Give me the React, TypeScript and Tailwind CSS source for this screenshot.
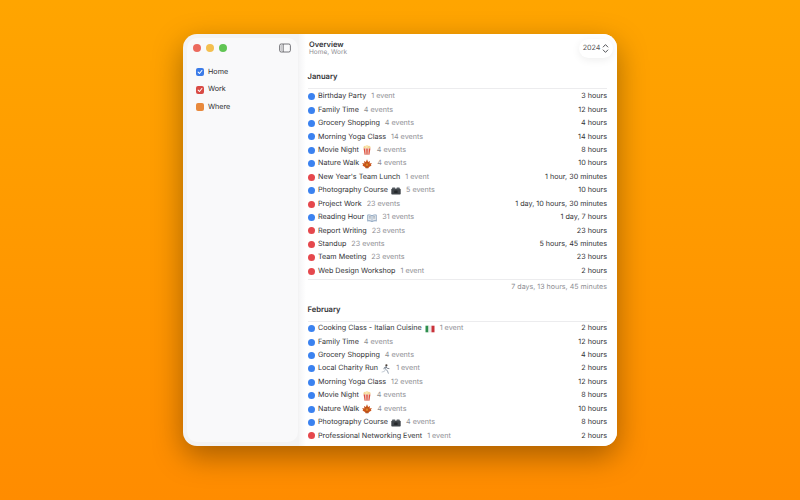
import React from "react";

const Popcorn = () => (
  <svg width="10" height="10" viewBox="0 0 10 10" className="shrink-0">
    <circle cx="3" cy="2.4" r="1.6" fill="#f3d79a" /><circle cx="5" cy="1.8" r="1.7" fill="#fbe7b0" /><circle cx="7" cy="2.4" r="1.6" fill="#f3d79a" />
    <path d="M1.6 3.4h6.8L7.4 9.8H2.6z" fill="#f0e6de" />
    <path d="M1.6 3.4h1.6l.4 6.4h-1zM4.2 3.4h1.6l-.2 6.4h-1.2zM6.8 3.4h1.6l-1 6.4h-1z" fill="#e0503f" />
  </svg>
);
const Leaf = () => (
  <svg width="10" height="10" viewBox="0 0 10 10" className="shrink-0">
    <path d="M5 .2 6.1 3l1.9-1-.4 2.6 2.2-.5-1 2 .8.5-3 1.7.3.9L5 8.8l-1.9.4.3-.9-3-1.7.8-.5-1-2 2.2.5L2 2l1.9 1z" fill="#c9541a" />
    <path d="M5 3.6v6.2" stroke="#7a3413" strokeWidth=".6" />
    <path d="M5 3.4 6.2 6 5 7.4 3.8 6z" fill="#e08a2a" />
  </svg>
);
const Clapper = () => (
  <svg width="10" height="10" viewBox="0 0 10 10" className="shrink-0">
    <rect x=".3" y="2.8" width="9.4" height="5.8" rx=".8" fill="#3f4449" />
    <rect x="1" y="1.6" width="3.4" height="1.6" rx=".7" fill="#565c62" /><rect x="5.4" y="1.6" width="3.4" height="1.6" rx=".7" fill="#565c62" />
    <rect x="3.2" y="4.4" width="3.4" height="2.6" rx=".6" fill="#24272a" />
  </svg>
);
const Book = () => (
  <svg width="10" height="10" viewBox="0 0 10 10" className="shrink-0">
    <path d="M.3 1.8C2 1.4 3.8 1.4 5 2.3c1.2-.9 3-.9 4.7-.5v6.6C8 8.1 6.2 8.1 5 8.9 3.8 8.1 2 8.1.3 8.4z" fill="#86a0bd" />
    <path d="M1.1 2.4c1.2-.2 2.6-.1 3.6.6v4.9c-1-.6-2.4-.7-3.6-.5zM8.9 2.4c-1.2-.2-2.6-.1-3.6.6v4.9c1-.6 2.4-.7 3.6-.5z" fill="#e6eaee" />
    <path d="M1.9 3.7h2M1.9 5h2M6.1 3.7h2M6.1 5h2" stroke="#808a96" strokeWidth=".6" />
  </svg>
);
const Italy = () => (
  <svg width="10" height="10" viewBox="0 0 10 10" className="shrink-0">
    <rect x=".5" y="1.7" width="3" height="6.6" fill="#2f8f4e" /><rect x="3.5" y="1.7" width="3" height="6.6" fill="#ececec" /><rect x="6.5" y="1.7" width="3" height="6.6" fill="#c9323a" />
  </svg>
);
const Runner = () => (
  <svg width="10" height="10" viewBox="0 0 10 10" className="shrink-0" fill="none">
    <circle cx="5.4" cy="1.3" r="1.1" fill="#4b4038" />
    <path d="M5.2 2.8 4.4 5.4l2 1.2.9 2.7" stroke="#9aa5b3" strokeWidth="1" strokeLinecap="round" />
    <path d="M4.4 5.4 3.4 7.4 1 8" stroke="#c0c7d1" strokeWidth=".9" strokeLinecap="round" />
    <path d="M5.2 3 3.4 3.6 3 4.8M5.2 3l1.2 1.4 1.6.2" stroke="#4b5563" strokeWidth=".7" strokeLinecap="round" />
  </svg>
);

type Row = { c: "b" | "r"; name: string; icon?: React.ReactNode; ev: string; t: string };

const jan: Row[] = [
  { c: "b", name: "Birthday Party", ev: "1 event", t: "3 hours" },
  { c: "b", name: "Family Time", ev: "4 events", t: "12 hours" },
  { c: "b", name: "Grocery Shopping", ev: "4 events", t: "4 hours" },
  { c: "b", name: "Morning Yoga Class", ev: "14 events", t: "14 hours" },
  { c: "b", name: "Movie Night", icon: <Popcorn />, ev: "4 events", t: "8 hours" },
  { c: "b", name: "Nature Walk", icon: <Leaf />, ev: "4 events", t: "10 hours" },
  { c: "r", name: "New Year's Team Lunch", ev: "1 event", t: "1 hour, 30 minutes" },
  { c: "b", name: "Photography Course", icon: <Clapper />, ev: "5 events", t: "10 hours" },
  { c: "r", name: "Project Work", ev: "23 events", t: "1 day, 10 hours, 30 minutes" },
  { c: "b", name: "Reading Hour", icon: <Book />, ev: "31 events", t: "1 day, 7 hours" },
  { c: "r", name: "Report Writing", ev: "23 events", t: "23 hours" },
  { c: "r", name: "Standup", ev: "23 events", t: "5 hours, 45 minutes" },
  { c: "r", name: "Team Meeting", ev: "23 events", t: "23 hours" },
  { c: "r", name: "Web Design Workshop", ev: "1 event", t: "2 hours" },
];
const feb: Row[] = [
  { c: "b", name: "Cooking Class - Italian Cuisine", icon: <Italy />, ev: "1 event", t: "2 hours" },
  { c: "b", name: "Family Time", ev: "4 events", t: "12 hours" },
  { c: "b", name: "Grocery Shopping", ev: "4 events", t: "4 hours" },
  { c: "b", name: "Local Charity Run", icon: <Runner />, ev: "1 event", t: "2 hours" },
  { c: "b", name: "Morning Yoga Class", ev: "12 events", t: "12 hours" },
  { c: "b", name: "Movie Night", icon: <Popcorn />, ev: "4 events", t: "8 hours" },
  { c: "b", name: "Nature Walk", icon: <Leaf />, ev: "4 events", t: "10 hours" },
  { c: "b", name: "Photography Course", icon: <Clapper />, ev: "4 events", t: "8 hours" },
  { c: "r", name: "Professional Networking Event", ev: "1 event", t: "2 hours" },
];

function EventRow({ r }: { r: Row }) {
  return (
    <div className="flex h-[13.43px] items-center text-[7.2px]">
      <span className={`mr-[3.5px] size-[7px] shrink-0 rounded-full ${r.c === "b" ? "bg-[#3b82f0]" : "bg-[#e5484d]"}`} />
      <span className="flex items-center gap-[3px] text-[#333336]">{r.name}{r.icon}</span>
      <span className="ml-[5px] text-[#8e8e93]">{r.ev}</span>
      <span className="ml-auto text-[#333336]">{r.t}</span>
    </div>
  );
}

function Check({ color, checked }: { color: string; checked: boolean }) {
  return (
    <span className={`flex size-[8px] items-center justify-center rounded-[2px] ${color}`}>
      {checked && (
        <svg width="6" height="6" viewBox="0 0 8 8" fill="none">
          <path d="M1.5 4.2 3.3 6l3.2-4" stroke="white" strokeWidth="1.4" strokeLinecap="round" strokeLinejoin="round" />
        </svg>
      )}
    </span>
  );
}

export default function App() {
  return (
    <div className="flex h-[500px] w-[800px] justify-center overflow-hidden bg-gradient-to-b from-[#ffa500] to-[#ff8c00] pt-[34px] font-['Inter',sans-serif] [text-rendering:geometricPrecision]">
      <div className="flex h-[412px] w-[434px] overflow-hidden rounded-[14px] bg-[#f3f3f4] shadow-[0_10px_30px_rgba(0,0,0,0.35)]">
        <aside className="my-[4px] ml-[4px] flex w-[111px] shrink-0 flex-col rounded-[10px] bg-[#f9f9fa] pl-[6px] pr-[7px] pt-[5px]">
          <div className="flex h-[10px] items-center gap-[5px]">
            <span className="size-[8px] rounded-full bg-[#ec6a5e]" />
            <span className="size-[8px] rounded-full bg-[#f4bf4f]" />
            <span className="size-[8px] rounded-full bg-[#61c554]" />
            <svg className="ml-auto" width="12" height="10" viewBox="0 0 12 10" fill="none">
              <rect x=".6" y="1" width="10.8" height="8" rx="1.6" stroke="#55565a" strokeWidth=".8" />
              <path d="M4.2 1v8" stroke="#55565a" strokeWidth=".8" />
              <rect x="1.4" y="1.8" width="2.4" height="6.4" rx=".6" fill="#c9c9cc" />
            </svg>
          </div>
          <div className="mt-[15px] flex flex-col gap-[9.6px] pl-[3px] text-[7.2px] text-[#2f2f31]">
            <div className="flex h-[8px] items-center gap-[4px]"><Check color="bg-[#3b7be8]" checked />Home</div>
            <div className="flex h-[8px] items-center gap-[4px]"><Check color="bg-[#d94a44]" checked />Work</div>
            <div className="flex h-[8px] items-center gap-[4px]"><Check color="bg-[#e8893c]" checked={false} />Where</div>
          </div>
        </aside>
        <main className="relative ml-[1px] min-w-0 flex-1 overflow-hidden bg-[linear-gradient(90deg,#f5f5f6,#ffffff_7px)] pl-[8.5px] pr-[10px] pt-[7px]">
          <div className="pl-[1.5px]">
            <div className="text-[7.5px] font-semibold leading-[8px] text-[#333336]">Overview</div>
            <div className="text-[6.5px] leading-[7px] text-[#8e8e93]">Home, Work</div>
          </div>
          <div className="absolute right-[4px] top-[5px] flex h-[19px] items-center gap-[1.5px] rounded-[10px] bg-white px-[4px] text-[7.2px] text-[#555558] shadow-[0_2px_8px_rgba(0,0,0,0.07)]">
            2024
            <svg width="7" height="11" viewBox="0 0 7 11" fill="none">
              <path d="M1.2 4 3.5 1.6 5.8 4M1.2 7l2.3 2.4L5.8 7" stroke="#55565a" strokeWidth="1" strokeLinecap="round" strokeLinejoin="round" />
            </svg>
          </div>
          <h2 className="mt-[16px] text-[7.6px] font-semibold leading-[10px] text-[#333336]">January</h2>
          <div className="mt-[6px] border-t border-[#ececee] pt-[1px]">
            {jan.map((r) => <EventRow key={r.name} r={r} />)}
          </div>
          <div className="mt-[1px] border-t border-[#ececee] pt-[2px] text-right text-[7.1px] leading-[10px] text-[#8e8e93]">7 days, 13 hours, 45 minutes</div>
          <h2 className="mt-[13px] text-[7.6px] font-semibold leading-[10px] text-[#333336]">February</h2>
          <div className="mt-[6px] border-t border-[#ececee]">
            {feb.map((r) => <EventRow key={r.name} r={r} />)}
            <div className="mt-[3.2px] size-[7px] rounded-full bg-[#e5484d]" />
          </div>
        </main>
      </div>
    </div>
  );
}
